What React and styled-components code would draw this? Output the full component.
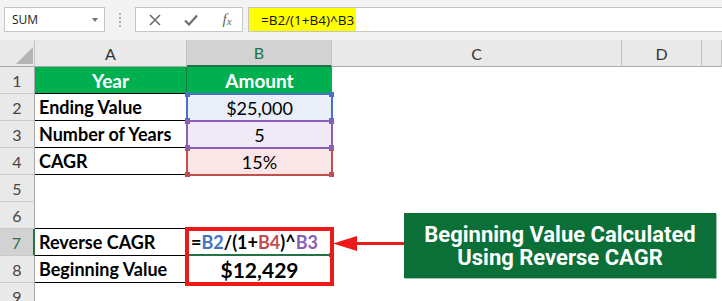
import styled, { createGlobalStyle } from "styled-components";

const GlobalStyle = createGlobalStyle`
  html, body {
    margin: 0;
    padding: 0;
    background: #fff;
  }
  body {
    overflow: hidden;
    font-family: "Lato", "Liberation Sans", sans-serif;
  }
`;

const Page = styled.div`
  position: relative;
  width: 722px;
  height: 301px;
  overflow: hidden;
  background: #fff;
`;

// ---- formula bar ----
const Toolbar = styled.div`
  display: flex;
  align-items: center;
  height: 40px;
  padding: 7px 0 8px 4px;
  box-sizing: border-box;
  background: #f3f3f3;
  font-family: "Open Sans", "Liberation Sans", sans-serif;
`;

const NameBox = styled.div`
  display: flex;
  align-items: center;
  justify-content: space-between;
  width: 101px;
  height: 25px;
  box-sizing: border-box;
  padding: 0 6px 0 7px;
  background: #fff;
  border: 1px solid #c6c6c6;
  font-size: 12px;
  color: #222;
`;

const Caret = styled.span`
  width: 0;
  height: 0;
  border-left: 3.5px solid transparent;
  border-right: 3.5px solid transparent;
  border-top: 4px solid #707070;
`;

const Grip = styled.div`
  display: flex;
  flex-direction: column;
  gap: 2px;
  margin: 0 14px 0 14px;
  > span {
    width: 2px;
    height: 2px;
    background: #b0b0b0;
  }
`;

const FxButtons = styled.div`
  display: grid;
  grid-template-columns: repeat(3, 36px);
  align-items: center;
  justify-items: center;
  width: 108px;
  height: 25px;
  box-sizing: border-box;
  padding-left: 1px;
  background: #fff;
  border: 1px solid #c6c6c6;
  color: #707070;
`;

const FxText = styled.span`
  font-family: "Liberation Serif", serif;
  font-style: italic;
  font-size: 15px;
  color: #666;
  > sub {
    font-size: 11px;
    vertical-align: -1px;
  }
`;

const FormulaInput = styled.div`
  display: flex;
  align-items: stretch;
  flex: 1;
  height: 25px;
  margin-left: 5px;
  box-sizing: border-box;
  background: #fff;
  border-top: 1px solid #c6c6c6;
  border-bottom: 1px solid #c6c6c6;
  border-left: 1px solid #c6c6c6;
`;

const Highlight = styled.span`
  display: flex;
  align-items: center;
  width: 107px;
  padding-left: 12px;
  box-sizing: border-box;
  background: #ffff00;
  font-size: 13.5px;
  color: #111;
`;

// ---- sheet grid ----
const Sheet = styled.div`
  display: grid;
  grid-template-columns: 35px 152px 145px 290px 80px 20px;
  grid-auto-rows: 27px;
`;

const ColHead = styled.div`
  display: flex;
  align-items: center;
  justify-content: center;
  box-sizing: border-box;
  background: ${(p) => (p.$active ? "#d2d2d2" : "#e9e9e9")};
  color: ${(p) => (p.$active ? "#217346" : "#333")};
  border-right: 1px solid #c3c3c3;
  border-bottom: ${(p) => (p.$active ? "2px solid #217346" : "1px solid #a9a9a9")};
  font-size: 16px;
`;

const Corner = styled.div`
  position: relative;
  box-sizing: border-box;
  background: #e9e9e9;
  border-right: 1px solid #c3c3c3;
  border-bottom: 1px solid #a9a9a9;
  &::after {
    content: "";
    position: absolute;
    left: 16px;
    top: 7px;
    width: 17px;
    height: 17px;
    background: #b5b5b5;
    clip-path: polygon(100% 0, 100% 100%, 0 100%);
  }
`;

const RowHead = styled.div`
  display: flex;
  align-items: center;
  justify-content: center;
  box-sizing: border-box;
  background: ${(p) => (p.$active ? "#d2d2d2" : "#e9e9e9")};
  color: ${(p) => (p.$active ? "#217346" : "#444")};
  border-bottom: 1px solid #c9c9c9;
  border-right: ${(p) => (p.$active ? "2px solid #217346" : "1px solid #a9a9a9")};
  font-size: 16px;
`;

const Cell = styled.div`
  position: relative;
  display: flex;
  align-items: center;
  justify-content: ${(p) => p.$align || "flex-start"};
  box-sizing: border-box;
  padding: 0 4px;
  background: ${(p) => p.$fill || "transparent"};
  color: ${(p) => p.$color || "#000"};
  font-weight: ${(p) => (p.$bold ? 700 : 400)};
  font-size: ${(p) => p.$size || 18}px;
  border-bottom: ${(p) => (p.$bb ? `${p.$bbw || 1}px solid ${p.$bb}` : "none")};
  border-right: ${(p) => (p.$br ? `1px solid ${p.$br}` : "none")};
  white-space: nowrap;
`;

// range highlight drawn by Excel while editing a formula
const RefFrame = styled.span`
  position: absolute;
  left: -1px;
  right: -1px;
  top: -1px;
  bottom: -1px;
  border: 2px solid ${(p) => p.$color};
  z-index: ${(p) => p.$z};
  pointer-events: none;
`;

const Handle = styled.span`
  position: absolute;
  width: 5px;
  height: 5px;
  background: ${(p) => p.$color};
  ${(p) => (p.$top ? "top: -3px;" : "bottom: -3px;")}
  ${(p) => (p.$left ? "left: -3px;" : "right: -3px;")}
`;

const Ref = styled.span`
  color: ${(p) => p.$color};
`;

const FillHandle = styled.span`
  position: absolute;
  right: -1px;
  bottom: -3px;
  width: 4px;
  height: 4px;
  background: #217346;
`;

// ---- shapes on top of the sheet ----
const RedFrame = styled.div`
  position: absolute;
  left: 185px;
  top: 227px;
  width: 149px;
  height: 59px;
  box-sizing: border-box;
  border: 4px solid #ee1a1a;
`;

const Arrow = styled.svg`
  position: absolute;
  left: 333px;
  top: 235px;
`;

const Callout = styled.div`
  position: absolute;
  left: 404px;
  top: 213px;
  width: 312px;
  height: 65px;
  display: flex;
  flex-direction: column;
  align-items: center;
  justify-content: center;
  background: #0b6f38;
  box-shadow: 1px 1px 0 #9cc3ab;
  color: #fff;
  font-family: "Roboto", "Liberation Sans", sans-serif;
  font-weight: 700;
  font-size: 22px;
  line-height: 23px;
  text-align: center;
`;

const Frame = ({ color, z }) => (
  <RefFrame $color={color} $z={z}>
    <Handle $color={color} $top $left />
    <Handle $color={color} $top />
    <Handle $color={color} $left />
    <Handle $color={color} />
  </RefFrame>
);

const BLUE = "#4472c4";
const PURPLE = "#8a5fb8";
const RED = "#c0504d";
const GREEN = "#00b050";

const App = () => {
  return (
    <Page>
      <GlobalStyle />
      <Toolbar>
        <NameBox>
          <span>SUM</span>
          <Caret />
        </NameBox>
        <Grip>
          <span />
          <span />
          <span />
          <span />
        </Grip>
        <FxButtons>
          <svg width="12" height="12" viewBox="0 0 12 12">
            <path d="M1 1 L11 11 M11 1 L1 11" stroke="#6e6e6e" strokeWidth="1.6" fill="none" />
          </svg>
          <svg width="14" height="12" viewBox="0 0 14 12">
            <path d="M1 6.5 L5 10.5 L13 1.5" stroke="#6e6e6e" strokeWidth="2.2" fill="none" />
          </svg>
          <FxText>
            f<sub>x</sub>
          </FxText>
        </FxButtons>
        <FormulaInput>
          <Highlight>=B2/(1+B4)^B3</Highlight>
        </FormulaInput>
      </Toolbar>

      <Sheet>
        <Corner />
        <ColHead>A</ColHead>
        <ColHead $active>B</ColHead>
        <ColHead>C</ColHead>
        <ColHead>D</ColHead>
        <ColHead />

        <RowHead>1</RowHead>
        <Cell $fill={GREEN} $color="#fff" $bold $size={19} $align="center" $bb="#000" $br="#1a7a40">
          Year
        </Cell>
        <Cell $fill={GREEN} $color="#fff" $bold $size={19} $align="center">
          Amount
        </Cell>
        <Cell />
        <Cell />
        <Cell />

        <RowHead>2</RowHead>
        <Cell $bold $bb="#000">Ending Value</Cell>
        <Cell $fill="#e9eef8" $align="center">
          <Frame color={BLUE} z={1} />
          $25,000
        </Cell>
        <Cell />
        <Cell />
        <Cell />

        <RowHead>3</RowHead>
        <Cell $bold $bb="#000">Number of Years</Cell>
        <Cell $fill="#efeaf5" $align="center">
          <Frame color={PURPLE} z={3} />5
        </Cell>
        <Cell />
        <Cell />
        <Cell />

        <RowHead>4</RowHead>
        <Cell $bold $bb="#000">CAGR</Cell>
        <Cell $fill="#fae6e6" $align="center">
          <Frame color={RED} z={2} />
          15%
        </Cell>
        <Cell />
        <Cell />
        <Cell />

        <RowHead>5</RowHead>
        <Cell />
        <Cell />
        <Cell />
        <Cell />
        <Cell />

        <RowHead>6</RowHead>
        <Cell $bb="#000" />
        <Cell />
        <Cell />
        <Cell />
        <Cell />

        <RowHead $active>7</RowHead>
        <Cell $bold $bb="#000" $br="#000">Reverse CAGR</Cell>
        <Cell $bold $size={18} $bb="#217346" $bbw={2}>
          =<Ref $color={BLUE}>B2</Ref>/(1+<Ref $color={RED}>B4</Ref>)^<Ref $color={PURPLE}>B3</Ref>
          <FillHandle />
        </Cell>
        <Cell />
        <Cell />
        <Cell />

        <RowHead>8</RowHead>
        <Cell $bold $bb="#000" $br="#000">Beginning Value</Cell>
        <Cell $bold $size={21} $align="center">$12,429</Cell>
        <Cell />
        <Cell />
        <Cell />

        <RowHead>9</RowHead>
        <Cell />
        <Cell />
        <Cell />
        <Cell />
        <Cell />
      </Sheet>

      <RedFrame />
      <Arrow width="73" height="17" viewBox="0 0 73 17">
        <polygon points="0,8.5 24,1 24,16" fill="#ee1a1a" />
        <rect x="22" y="7" width="51" height="3" fill="#ee1a1a" />
      </Arrow>
      <Callout>
        <span>Beginning Value Calculated</span>
        <span>Using Reverse CAGR</span>
      </Callout>
    </Page>
  );
};

export default App;
